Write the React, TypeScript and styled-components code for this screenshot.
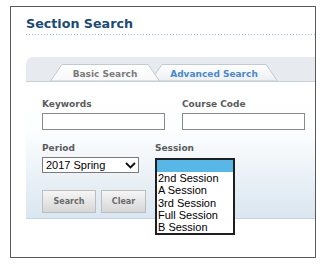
import { createGlobalStyle, styled } from "styled-components";

const GlobalStyle = createGlobalStyle`
  body {
    margin: 0;
    background: #fff;
    font-family: "DejaVu Sans", Verdana, sans-serif;
  }
`;

const Frame = styled.div`
  box-sizing: border-box;
  margin: 6px 0 0 10px;
  width: 306px;
  height: 252px;
  border: 1px solid #5a5a5a;
  padding-left: 15px;
  overflow: hidden;
`;

const Title = styled.h1`
  margin: 9px 0 0;
  padding-bottom: 4px;
  font-size: 12.7px;
  line-height: 15px;
  font-weight: bold;
  color: #1d4a73;
  background: linear-gradient(to right, #9cc3dd 1px, transparent 1px) 0 100% / 3px 1px repeat-x;
`;

const TabBar = styled.div`
  margin-top: 22px;
  height: 25px;
  padding: 8px 0 0 24px;
  box-sizing: border-box;
  display: flex;
  align-items: flex-end;
  background: #e7ebef;
  border-top-left-radius: 7px;
  border-bottom: 1px solid #c6ced6;
`;

const Tab = styled.div<{ $w: number; $active?: boolean }>`
  position: relative;
  width: ${(p) => p.$w}px;
  height: 17px;
  margin-left: ${(p) => (p.$active ? 0 : -10)}px;
  z-index: ${(p) => (p.$active ? 2 : 1)};
  display: flex;
  align-items: center;
  justify-content: center;
  font-size: 9px;
  font-weight: bold;
  color: ${(p) => (p.$active ? "#7a7a7a" : "#4a88c9")};
  svg {
    position: absolute;
    inset: 0;
    z-index: -1;
  }
`;

const TabLabel = styled.span`
  position: relative;
  padding-top: 2px;
`;

const Panel = styled.div`
  height: 137px;
  box-sizing: border-box;
  padding: 17px 0 0 16px;
  background: linear-gradient(#ffffff 0%, #fdfeff 35%, #dae6f0 100%);
  border-bottom: 1px solid #c3d5e3;
`;

const Row = styled.div<{ $gap?: number }>`
  display: flex;
  margin-bottom: ${(p) => p.$gap ?? 0}px;
`;

const Field = styled.div<{ $w: number }>`
  width: ${(p) => p.$w}px;
  flex: none;
  position: relative;
`;

const Label = styled.div`
  font-size: 9px;
  line-height: 11px;
  font-weight: bold;
  color: #5b5b5b;
  margin-bottom: 3px;
`;

const TextBox = styled.div`
  box-sizing: border-box;
  width: 123px;
  height: 17px;
  border: 1px solid #8a8a8a;
  background: #fff;
`;

const SelectBox = styled.div`
  box-sizing: border-box;
  width: 97px;
  height: 16px;
  border: 1px solid #7a7a7a;
  background: #fff;
  display: flex;
  align-items: center;
  justify-content: space-between;
  padding: 0 2px 0 3px;
  font-family: "Liberation Sans", Arial, sans-serif;
  font-size: 11px;
  color: #000;
`;

const Anchor = styled.div`
  position: relative;
  height: 16px;
`;

const DropList = styled.div`
  position: absolute;
  top: 1px;
  left: 0;
  width: 80px;
  box-sizing: border-box;
  border: 2px solid #1e1e1e;
  background: #fff;
  z-index: 5;
`;

const Option = styled.div<{ $selected?: boolean }>`
  height: 12.2px;
  line-height: 12.2px;
  padding-left: 1px;
  font-family: "Liberation Sans", Arial, sans-serif;
  font-size: 11px;
  color: #000;
  background: ${(p) => (p.$selected ? "#58b7e6" : "transparent")};
  white-space: nowrap;
`;

const Buttons = styled.div`
  display: flex;
  gap: 5px;
`;

const Button = styled.button<{ $w: number }>`
  width: ${(p) => p.$w}px;
  height: 23px;
  padding: 0;
  border: 1px solid #bdbdbd;
  background: linear-gradient(#f6f6f6, #d6d6d6);
  font-family: "DejaVu Sans", Verdana, sans-serif;
  font-size: 8px;
  font-weight: bold;
  color: #6a6a6a;
`;

function TabShape({ w, active }: { w: number; active?: boolean }) {
  const id = active ? "tabA" : "tabB";
  return (
    <svg width={w} height={17} viewBox={`0 0 ${w} 17`}>
      <defs>
        <linearGradient id={id} x1="0" y1="0" x2="0" y2="1">
          <stop offset="0" stopColor="#ffffff" />
          <stop offset="1" stopColor={active ? "#f7f8fa" : "#eceff2"} />
        </linearGradient>
      </defs>
      <polygon
        points={`0.5,17 12,0.5 ${w - 12},0.5 ${w - 0.5},17`}
        fill={`url(#${id})`}
        stroke="#c2cad2"
        strokeWidth="1"
      />
    </svg>
  );
}

const sessions = ["2nd Session", "A Session", "3rd Session", "Full Session", "B Session"];

export default function App() {
  return (
    <>
      <GlobalStyle />
      <Frame>
        <Title>Section Search</Title>
        <TabBar>
          <Tab $w={110} $active>
            <TabShape w={110} active />
            <TabLabel>Basic Search</TabLabel>
          </Tab>
          <Tab $w={128}>
            <TabShape w={128} />
            <TabLabel>Advanced Search</TabLabel>
          </Tab>
        </TabBar>
        <Panel>
          <Row $gap={13}>
            <Field $w={140}>
              <Label>Keywords</Label>
              <TextBox />
            </Field>
            <Field $w={140}>
              <Label>Course Code</Label>
              <TextBox />
            </Field>
          </Row>
          <Row $gap={17}>
            <Field $w={113}>
              <Label>Period</Label>
              <SelectBox>
                <span>2017 Spring</span>
                <svg width="11" height="7" viewBox="0 0 11 7">
                  <polyline points="1,1 5.5,5.5 10,1" fill="none" stroke="#111" strokeWidth="1.8" />
                </svg>
              </SelectBox>
            </Field>
            <Field $w={100}>
              <Label>Session</Label>
              <Anchor>
                <DropList>
                  <Option $selected>&nbsp;</Option>
                  {sessions.map((s) => (
                    <Option key={s}>{s}</Option>
                  ))}
                </DropList>
              </Anchor>
            </Field>
          </Row>
          <Buttons>
            <Button $w={54}>Search</Button>
            <Button $w={45}>Clear</Button>
          </Buttons>
        </Panel>
      </Frame>
    </>
  );
}
